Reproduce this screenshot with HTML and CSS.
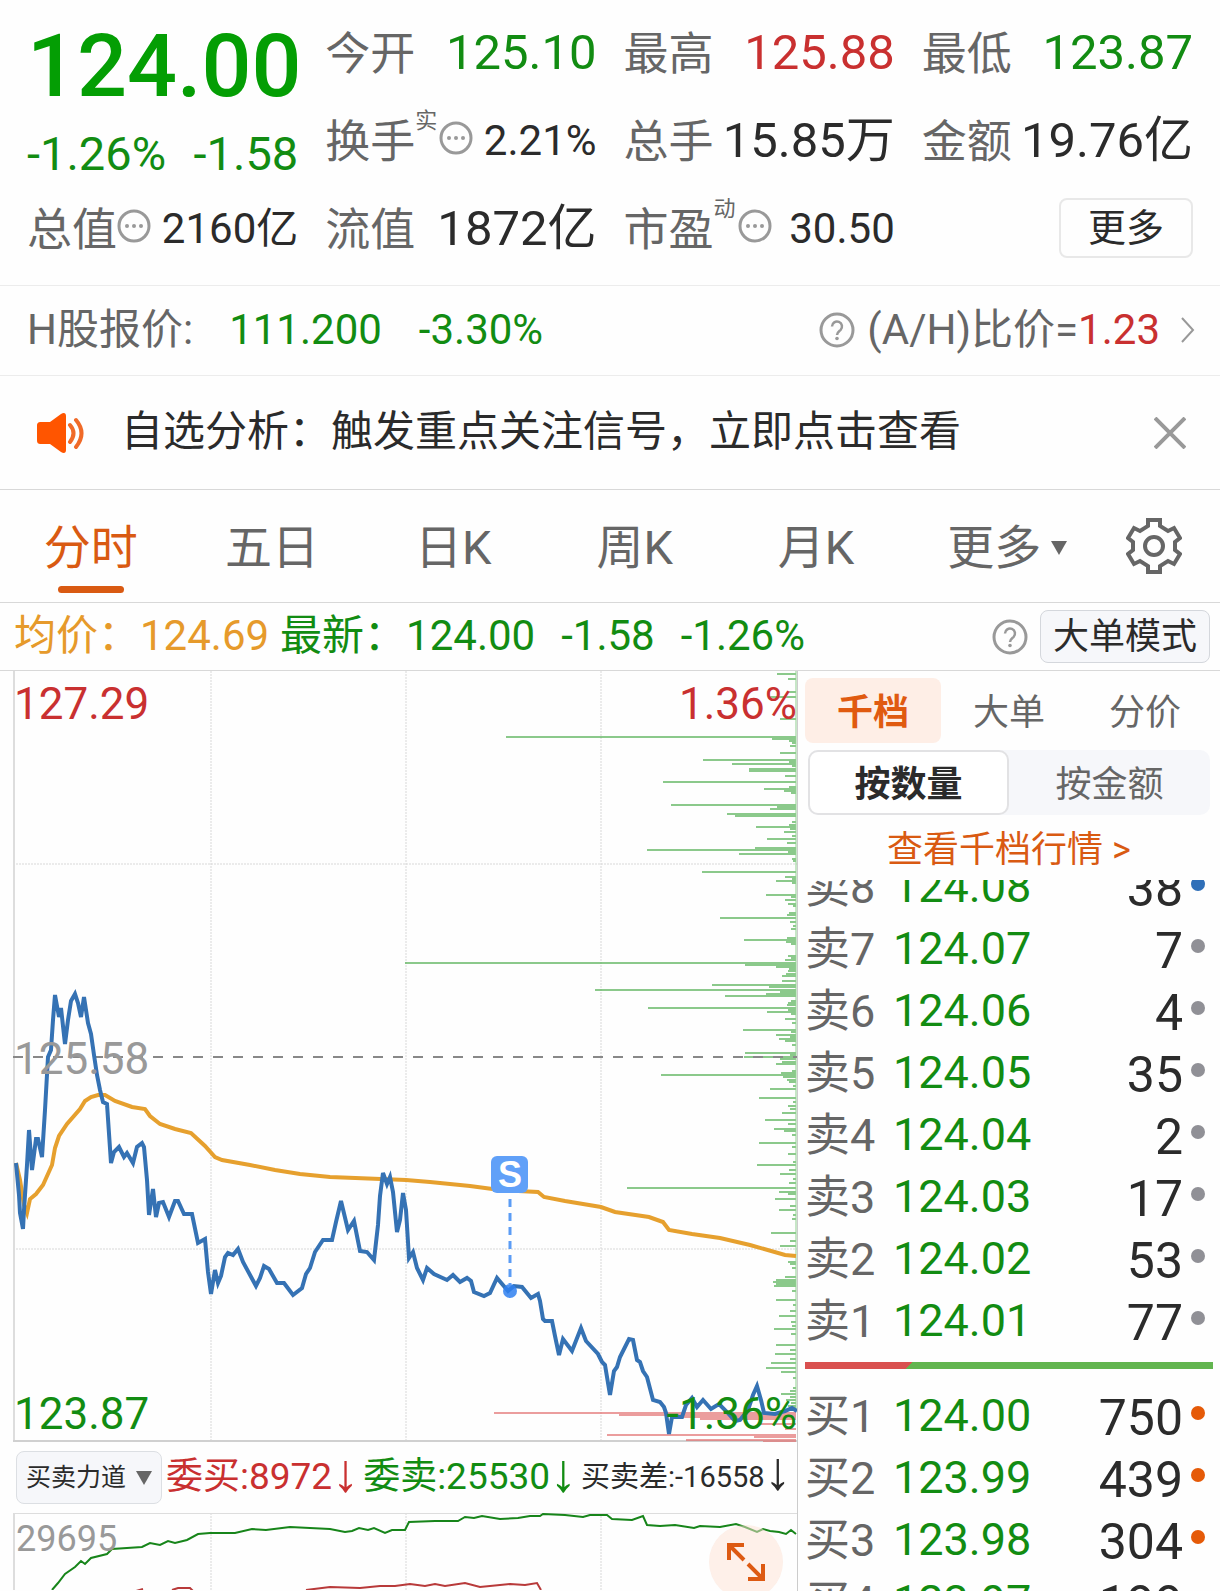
FILE: index.html
```html
<!DOCTYPE html>
<html lang="zh-CN">
<head>
<meta charset="utf-8">
<meta name="viewport" content="width=device-width, initial-scale=1">
<title>分时行情</title>
<link rel="stylesheet" href="styles.css">
</head>
<body>
<svg class="defs" aria-hidden="true">
  <symbol id="dots" viewBox="0 0 34 34"><circle cx="17" cy="17" r="15" fill="none" stroke="#999" stroke-width="3"/><circle cx="10" cy="17" r="2" fill="#999"/><circle cx="17" cy="17" r="2" fill="#999"/><circle cx="24" cy="17" r="2" fill="#999"/></symbol>
  <symbol id="help" viewBox="0 0 36 36"><circle cx="18" cy="18" r="16" fill="none" stroke="#999" stroke-width="3"/><path d="M13 14.500a5 5 0 1 1 8.500 3.600c-2.200 1.900-3.500 2.600-3.500 5" fill="none" stroke="#999" stroke-width="2.500"/><circle cx="18" cy="26.500" r="1.800" fill="#999"/></symbol>
</svg>

<header class="quote">
  <div class="last">
    <strong class="last-price">124.00</strong>
    <div class="last-change"><span>-1.26%</span><span>-1.58</span></div>
  </div>
  <div class="stat"><span class="name">今开</span><span class="value down">125.10</span></div>
  <div class="stat"><span class="name">最高</span><span class="value up">125.88</span></div>
  <div class="stat"><span class="name">最低</span><span class="value down">123.87</span></div>
  <div class="stat"><span class="name">换手<sup>实</sup></span><svg class="dots"><use href="#dots"/></svg><span class="value small">2.21%</span></div>
  <div class="stat"><span class="name">总手</span><span class="value">15.85万</span></div>
  <div class="stat"><span class="name">金额</span><span class="value">19.76亿</span></div>
  <div class="stat"><span class="name">总值</span><svg class="dots"><use href="#dots"/></svg><span class="value small">2160亿</span></div>
  <div class="stat"><span class="name">流值</span><span class="value">1872亿</span></div>
  <div class="stat"><span class="name">市盈<sup>动</sup></span><svg class="dots"><use href="#dots"/></svg><span class="value small">30.50</span></div>
  <div class="stat"><button class="more" type="button">更多</button></div>
</header>

<a class="hshare" href="#h">
  <span class="name">H股报价:</span>
  <span class="down h-price">111.200</span>
  <span class="down">-3.30%</span>
  <span class="ratio"><svg class="help"><use href="#help"/></svg><span>(A/H)比价=<b class="up">1.23</b></span>
  <svg class="chevron" viewBox="0 0 16 28"><path d="M2 2l11 12L2 26" fill="none" stroke="#999" stroke-width="2"/></svg></span>
</a>

<div class="notice">
  <svg class="speaker" viewBox="0 0 50 42"><path d="M4 10h9L24 2c3-2 5-1 5 2v34c0 3-2 4-5 2l-11-8H4c-3 0-4-1-4-4V14c0-3 1-4 4-4z" fill="#ff5500"/><path d="M33 13q7 8 0 17M39 8q11 13 0 27" fill="none" stroke="#f06a28" stroke-width="4" stroke-linecap="round"/></svg>
  <span>自选分析：触发重点关注信号，立即点击查看</span>
  <button class="close" type="button" aria-label="关闭"><svg viewBox="0 0 32 32"><path d="M1 1l30 30M31 1L1 31" stroke="#999" stroke-width="4"/></svg></button>
</div>

<nav class="periods">
  <button class="active" type="button">分时</button>
  <button type="button">五日</button>
  <button type="button">日K</button>
  <button type="button">周K</button>
  <button type="button">月K</button>
  <button class="others" type="button">更多<i class="caret"></i></button>
  <button class="settings" type="button" aria-label="设置"><svg viewBox="0 0 56 58"><path d="M22 3h12v6l8 5 6-3 6 10-5 4v8l5 4-6 10-6-3-8 5v6H22v-6l-8-5-6 3-6-10 5-4v-8l-5-4 6-10 6 3 8-5z" fill="none" stroke="#666" stroke-width="4"/><circle cx="28" cy="29" r="9" fill="none" stroke="#666" stroke-width="4"/></svg></button>
</nav>

<div class="info">
  <span class="average">均价：124.69</span>
  <span class="down latest">最新：124.00</span>
  <span class="down">-1.58</span>
  <span class="down">-1.26%</span>
  <svg class="help"><use href="#help"/></svg>
  <button class="big-order" type="button">大单模式</button>
</div>

<main class="board">
  <section class="charts">
    <div class="plot">
      <svg class="price-chart" viewBox="13 671 784 771" preserveAspectRatio="none">
        <path d="M13 864H797M13 1249H797M211 671V1442M406 671V1442M601 671V1442" stroke="#d8d8d8" stroke-dasharray="2 1" fill="none"/>
        <path d="M14 671V1442" stroke="#ddd" stroke-width="2"/>
        <path d="M13 1441H797" stroke="#d0d0d0" stroke-width="2"/>
        <path class="sell-depth" d="M777 674H796M788 679H796M789 692H796M770 697H796M780 719H796M506 737H796M772 739H796M789 741H796M792 743H796M790 746H796M780 753H796M703 760H796M789 762H796M732 764H796M792 766H796M749 769H796M749 771H796M785 776H796M663 782H796M789 787H796M764 789H796M784 791H796M791 793H796M671 805H796M777 807H796M770 809H796M727 814H796M735 816H796M792 822H796M789 825H796M756 827H796M790 829H796M784 832H796M792 836H796M767 839H796M787 843H796M755 848H796M647 850H796M788 852H796M739 854H796M792 859H796M793 861H796M702 872H796M785 877H796M792 879H796M776 881H796M792 883H796M766 895H796M791 897H796M785 900H796M788 904H796M793 906H796M789 913H796M787 915H796M720 918H796M790 922H796M793 926H796M791 929H796M787 938H796M744 940H796M786 942H796M791 944H796M788 956H796M791 958H796M785 960H796M405 963H796M745 965H796M776 967H796M789 969H796M788 971H796M786 974H796M782 976H796M782 981H796M712 985H796M769 987H796M595 990H796M780 992H796M766 994H796M725 996H796M791 1001H796M788 1003H796M787 1005H796M648 1008H796M788 1010H796M767 1012H796M791 1014H796M785 1019H796M792 1023H796M743 1030H796M791 1032H796M776 1035H796M790 1037H796M779 1039H796M785 1041H796M792 1045H796M745 1053H796M790 1055H796M744 1057H796M780 1059H796M782 1062H796M776 1064H796M792 1071H796M781 1073H796M661 1075H796M783 1077H796M787 1080H796M789 1082H796M793 1086H796M770 1089H796M759 1098H796M793 1102H796M788 1106H796M790 1109H796M782 1113H796M765 1120H796M788 1124H796M774 1129H796M784 1131H796M792 1135H796M759 1143H796M792 1147H796M788 1154H796M793 1162H796M757 1165H796M789 1170H796M780 1174H796M793 1179H796M789 1183H796M627 1188H796M779 1192H796M788 1194H796M775 1199H796M790 1206H796M779 1210H796M793 1215H796M792 1219H796M771 1233H796M790 1241H796M780 1246H796M788 1262H796M790 1264H796M792 1268H796M785 1277H796M776 1280H796M773 1282H796M776 1284H796M774 1286H796M792 1291H796M776 1300H796M793 1305H796M790 1311H796M779 1316H796M791 1322H796M792 1326H796M774 1329H796M791 1334H796M776 1345H796M790 1350H796M775 1354H796M790 1359H796M771 1363H796M766 1368H796M781 1372H796M793 1378H796M793 1388H796M790 1391H796M781 1394H796M790 1397H796M786 1400H796M791 1403H796M788 1406H796M792 1408H796"/>
        <path d="M796 671V1410" stroke="#8fcf8f" stroke-width="1"/>
        <path class="buy-depth" d="M494 1413H796M619 1415H796M672 1417H796M700 1419H796M760 1424H796M785 1429H796M607 1435H796M754 1437H796M686 1440H796M763 1442H796"/>
        <path d="M13 1057H797" stroke="#888" stroke-width="2" stroke-dasharray="10 10"/>
        <polyline class="average-line" points="16,1163 20,1180 24,1205 27,1213 30,1199 36,1194 43,1185 52,1165 55,1148 59,1136 67,1124 80,1109 85,1101 91,1097 98,1095 105,1095 115,1101 132,1107 145,1109 150,1116 160,1124 175,1129 191,1133 205,1146 215,1157 222,1160 250,1165 275,1170 300,1174 330,1177 406,1180 430,1182 470,1186 500,1190 538,1192 544,1197 565,1201 601,1207 615,1212 649,1217 663,1222 669,1230 692,1234 720,1238 750,1245 785,1255 796,1256"/>
        <polyline class="price-line" points="16,1163 19,1195 20,1213 23,1229 24,1210 27,1165 29,1130 32,1170 36,1139 38,1139 42,1157 45,1110 48,1057 51,1050 53,1020 55,995 59,1017 61,1008 65,1044 68,1020 71,1001 75,994 78,1003 81,1017 84,997 88,1023 91,1034 94,1055 97,1075 100,1090 103,1102 107,1104 111,1163 114,1152 119,1147 124,1157 127,1153 133,1163 137,1147 142,1143 144,1147 147,1180 149,1215 153,1189 156,1217 159,1203 163,1202 169,1217 175,1201 178,1201 184,1214 192,1214 198,1243 205,1239 208,1272 211,1294 215,1270 218,1283 221,1276 225,1257 228,1253 233,1255 238,1249 243,1262 256,1286 260,1278 264,1266 269,1269 277,1283 284,1283 293,1295 302,1288 306,1274 310,1268 315,1252 323,1240 332,1240 336,1222 341,1201 348,1230 354,1221 360,1251 367,1252 374,1260 378,1225 380,1196 383,1173 387,1184 390,1177 393,1192 397,1232 400,1220 403,1193 406,1210 409,1258 413,1252 417,1268 423,1280 427,1268 434,1274 447,1280 453,1275 460,1282 467,1278 471,1281 474,1292 484,1296 490,1293 497,1278 508,1291 514,1286 522,1287 531,1298 538,1294 540,1301 543,1319 545,1321 552,1321 555,1336 559,1355 563,1339 572,1351 581,1328 586,1341 598,1354 602,1362 605,1365 610,1395 614,1371 617,1367 620,1357 629,1339 633,1340 637,1360 640,1362 643,1371 647,1377 653,1400 660,1402 664,1407 666,1413 669,1434 672,1417 682,1417 686,1405 692,1398 697,1407 703,1400 711,1409 719,1404 727,1412 735,1421 740,1420 748,1410 753,1395 757,1386 761,1400 764,1413 775,1414 785,1411 792,1408 797,1411"/>
        <path d="M510 1199V1284" stroke="#5b9cf5" stroke-width="3" stroke-dasharray="8 6"/>
        <circle cx="510" cy="1291" r="7" fill="#2f80f0" opacity=".85"/>
        <rect x="491" y="1156" width="37" height="37" rx="6" fill="#60a0f8"/>
        <text x="510" y="1187" class="mark">S</text>
      </svg>
      <span class="axis top left up">127.29</span>
      <span class="axis top right up">1.36%</span>
      <span class="axis middle left">125.58</span>
      <span class="axis bottom left down">123.87</span>
      <span class="axis bottom right down">-1.36%</span>
    </div>

    <div class="indicator">
      <button class="picker" type="button">买卖力道<i class="caret"></i></button>
      <span class="up">委买:8972<i class="arrow">↓</i></span>
      <span class="down">委卖:25530<i class="arrow">↓</i></span>
      <span class="diff">买卖差:-16558<i class="arrow">↓</i></span>
    </div>

    <div class="subplot">
      <svg class="force-chart" viewBox="13 1514 784 77" preserveAspectRatio="none">
        <path d="M211 1514V1591M406 1514V1591M601 1514V1591" stroke="#d8d8d8" stroke-dasharray="2 1"/>
        <path d="M14 1514V1591M13 1514H797" stroke="#ddd" stroke-width="2"/>
        <polyline fill="none" stroke="#17851a" stroke-width="2" points="52,1591 58,1584 65,1575 75,1568 81,1562 85,1565 91,1559 107,1555 112,1550 142,1548 150,1544 160,1546 168,1542 175,1544 187,1541 198,1535 210,1534 235,1534 252,1530 266,1531 290,1528 330,1530 345,1533 352,1532 359,1529 368,1531 374,1529 385,1534 392,1531 405,1531 409,1523 435,1522 458,1522 465,1518 474,1519 482,1517 500,1520 518,1519 530,1517 540,1517 543,1515 565,1516 583,1518 590,1516 607,1516 612,1520 632,1521 643,1517 647,1526 660,1527 675,1526 694,1529 700,1527 720,1528 736,1525 745,1528 757,1533 763,1530 770,1532 779,1533 786,1535 791,1531 796,1535"/>
        <path fill="none" stroke="#b83a3a" stroke-width="2" d="M136 1592L143 1590M172 1591L178 1589L190 1589L193 1592M306 1591L330 1588L360 1589L380 1587L395 1587L410 1585L425 1587L435 1585L445 1587L465 1584L480 1588L510 1585L525 1586L537 1584L541 1591"/>
      </svg>
      <span class="axis scale">29695</span>
      <button class="expand" type="button" aria-label="全屏"><svg viewBox="0 0 38 38"><path d="M2 17V2h15M2 2l15 15M36 21v15H21M36 36L21 21" fill="none" stroke="#dd5a12" stroke-width="4"/></svg></button>
    </div>
  </section>

  <aside class="depth">
    <div class="modes">
      <button class="active" type="button">千档</button>
      <button type="button">大单</button>
      <button type="button">分价</button>
    </div>
    <div class="segment">
      <button class="active" type="button">按数量</button>
      <button type="button">按金额</button>
    </div>
    <a class="all-levels" href="#levels">查看千档行情 &gt;</a>
    <div class="asks">
      <table>
        <tr><th>卖8</th><td class="price">124.08</td><td class="qty">38</td><td class="dot blue"></td></tr>
        <tr><th>卖7</th><td class="price">124.07</td><td class="qty">7</td><td class="dot"></td></tr>
        <tr><th>卖6</th><td class="price">124.06</td><td class="qty">4</td><td class="dot"></td></tr>
        <tr><th>卖5</th><td class="price">124.05</td><td class="qty">35</td><td class="dot"></td></tr>
        <tr><th>卖4</th><td class="price">124.04</td><td class="qty">2</td><td class="dot"></td></tr>
        <tr><th>卖3</th><td class="price">124.03</td><td class="qty">17</td><td class="dot"></td></tr>
        <tr><th>卖2</th><td class="price">124.02</td><td class="qty">53</td><td class="dot"></td></tr>
        <tr><th>卖1</th><td class="price">124.01</td><td class="qty">77</td><td class="dot"></td></tr>
      </table>
    </div>
    <div class="balance"></div>
    <div class="bids">
      <table>
        <tr><th>买1</th><td class="price">124.00</td><td class="qty">750</td><td class="dot orange"></td></tr>
        <tr><th>买2</th><td class="price">123.99</td><td class="qty">439</td><td class="dot orange"></td></tr>
        <tr><th>买3</th><td class="price">123.98</td><td class="qty">304</td><td class="dot orange"></td></tr>
        <tr><th>买4</th><td class="price">123.97</td><td class="qty">199</td><td class="dot orange"></td></tr>
      </table>
    </div>
  </aside>
</main>
</body>
</html>
```
FILE: styles.css
```css
* { box-sizing: border-box; }

body {
  margin: 0;
  height: 100vh;
  overflow: hidden;
  display: flex;
  flex-direction: column;
  background: #fefefe;
  color: #2b2b2b;
  font-family: Roboto, "Noto Sans CJK SC", sans-serif;
  font-size: 42px;
  line-height: 1.2;
  white-space: nowrap;
}

button {
  margin: 0;
  padding: 0;
  border: 0;
  background: none;
  color: inherit;
  font: inherit;
}

a { color: inherit; text-decoration: none; }
i { font-style: normal; }
b { font-weight: 400; }
svg { display: block; flex: none; }

.defs { position: absolute; width: 0; height: 0; }
.up { color: #c93030; }
.down { color: #128c12; }
.name { color: #666; }
.help { width: 36px; height: 36px; }

/* Quote header */
.quote {
  flex: none;
  display: grid;
  grid-template-columns: repeat(4, minmax(0, 1fr));
  grid-auto-rows: 88px;
  column-gap: 27px;
  padding: 8px 27px 13px;
  border-bottom: 1px solid #ececec;
}

.last {
  grid-row: span 2;
  display: flex;
  flex-direction: column;
  color: #049e04;
}

.last-price {
  font-size: 88px;
  font-weight: 500;
  line-height: 116px;
}

.last-change {
  display: flex;
  justify-content: space-between;
  font-size: 47px;
  line-height: 60px;
  color: #128c12;
}

.stat { display: flex; align-items: center; }
.stat .name { padding-top: 5px; font-size: 45px; }
.stat sup { margin-right: 2px; font-size: 22px; line-height: 0; vertical-align: 30px; }
.stat .value { margin-left: auto; padding-top: 2px; font-size: 49px; }
.stat .small { font-size: 42px; }
.dots { width: 34px; height: 34px; margin-bottom: 4px; }

.more {
  width: 134px;
  height: 60px;
  margin-left: auto;
  border: 2px solid #e8e8e8;
  border-radius: 8px;
  font-size: 38px;
  line-height: 52px;
}

/* H share row */
.hshare {
  flex: none;
  height: 90px;
  display: flex;
  align-items: center;
  padding: 0 24px 0 27px;
  border-bottom: 1px solid #ececec;
}

.h-price { margin: 0 37px 0 36px; }

.ratio {
  display: flex;
  align-items: center;
  gap: 12px;
  margin-left: auto;
  color: #666;
}

.chevron { width: 16px; height: 28px; margin-left: 8px; }

/* Notice row */
.notice {
  flex: none;
  height: 114px;
  display: flex;
  align-items: center;
  padding: 0 34px 0 37px;
  border-bottom: 1px solid #d8d8d8;
}

.speaker { width: 50px; height: 42px; margin-right: 34px; }
.close { margin-left: auto; }
.close svg { width: 32px; height: 32px; }

/* Period tabs */
.periods {
  flex: none;
  height: 113px;
  display: grid;
  grid-template-columns: repeat(6, minmax(0, 1fr)) 132px;
  border-bottom: 1px solid #d8d8d8;
  color: #666;
}

.periods button {
  display: flex;
  align-items: center;
  justify-content: center;
  padding-top: 4px;
  font-size: 47px;
}

.periods .active {
  position: relative;
  color: #d95a12;
}

.periods .active::after {
  content: "";
  position: absolute;
  bottom: 9px;
  width: 66px;
  height: 7px;
  border-radius: 4px;
  background: #d95a12;
}

.periods .others { padding-left: 20px; }
.periods .settings { padding-top: 0; }
.settings svg { width: 56px; height: 58px; }

.caret {
  margin-left: 10px;
  border: 8px solid transparent;
  border-top: 14px solid #666;
  border-bottom: 0;
}

/* Average and latest price line */
.info {
  flex: none;
  height: 68px;
  display: flex;
  align-items: center;
  gap: 26px;
  padding: 0 10px 0 14px;
  border-bottom: 1px solid #d8d8d8;
}

.average { color: #e69a2b; }
.latest { margin-left: -15px; }
.info .help { margin-left: auto; }

.big-order {
  width: 170px;
  height: 53px;
  margin-left: -14px;
  border: 1px solid #d4d7dc;
  border-radius: 8px;
  background: #f6f7fa;
  font-size: 36px;
  line-height: 53px;
}

/* Charts and order book */
.board {
  flex: 1;
  min-height: 0;
  overflow: hidden;
  display: grid;
  grid-template-columns: minmax(0, 798fr) minmax(0, 422fr);
}

.charts {
  display: flex;
  flex-direction: column;
  min-height: 0;
  padding-left: 13px;
  border-right: 1px solid #ccc;
}

.plot { position: relative; flex: none; }
.price-chart { width: 100%; height: 771px; }
.sell-depth { stroke: #4fae4f; stroke-width: 2; opacity: .65; }
.buy-depth { stroke: #e26a6a; stroke-width: 2; opacity: .65; }
.average-line { fill: none; stroke: #e6a02e; stroke-width: 4; }
.price-line { fill: none; stroke: #3572b4; stroke-width: 4; }

.mark {
  fill: #fff;
  font-family: "Liberation Sans", sans-serif;
  font-size: 36px;
  font-weight: 700;
  text-anchor: middle;
}

.axis { position: absolute; font-size: 44px; line-height: 56px; }
.axis.left { left: 1px; }
.axis.right { right: 0; }
.axis.top { top: 5px; }
.axis.middle { top: 360px; color: #999; }
.axis.bottom { bottom: 0; }

.indicator {
  flex: none;
  height: 71px;
  display: flex;
  align-items: center;
  gap: 4px;
  padding: 0 4px 0 3px;
  font-size: 37px;
}

.picker {
  flex: none;
  width: 146px;
  height: 53px;
  display: flex;
  align-items: center;
  justify-content: center;
  border: 1px solid #dcdfe3;
  border-radius: 8px;
  background: #f6f7fa;
  font-size: 25px;
}

.indicator .diff { font-size: 29px; }

.arrow {
  font-family: "Liberation Sans", sans-serif;
  font-size: 54px;
  line-height: 0;
  vertical-align: -2px;
}

.subplot { position: relative; flex: 1; }
.force-chart { width: 100%; height: 77px; }

.axis.scale {
  top: 2px;
  left: 3px;
  color: #999;
  font-size: 36px;
  line-height: 48px;
}

.expand {
  position: absolute;
  top: 12px;
  right: 14px;
  width: 74px;
  height: 74px;
  display: flex;
  align-items: center;
  justify-content: center;
  border-radius: 50%;
  background: rgba(253, 226, 212, .5);
}

.expand svg { width: 38px; height: 38px; }

.depth { padding: 7px 7px 0; font-size: 36px; min-height: 0; }
.modes { display: flex; height: 65px; color: #666; }
.modes button { flex: 1; padding-top: 6px; border-radius: 8px; }

.modes .active {
  background: #feeee6;
  color: #e05a10;
  font-weight: 700;
}

.segment {
  display: flex;
  height: 65px;
  margin: 7px 3px 0;
  border-radius: 10px;
  background: #f6f7fa;
  color: #666;
}

.segment button { width: 50%; padding-top: 6px; }

.segment .active {
  border: 2px solid #e2e2e4;
  border-radius: 10px;
  background: #fff;
  color: #2b2b2b;
  font-weight: 700;
}

.all-levels {
  display: block;
  height: 65px;
  color: #d95a12;
  line-height: 70px;
  text-align: center;
}

.asks {
  height: 471px;
  overflow: hidden;
  display: flex;
  flex-direction: column;
  justify-content: flex-end;
}

.depth table {
  flex: none;
  width: 100%;
  border-collapse: collapse;
  table-layout: fixed;
}

.depth tr { height: 62px; }
.depth th, .depth td { padding: 0; line-height: 56px; }

.depth th {
  width: 88px;
  padding-top: 4px;
  color: #666;
  font-size: 45px;
  font-weight: 400;
  text-align: left;
}

.depth .price { width: 150px; padding-top: 2px; color: #128c12; font-size: 45px; }
.depth .qty { padding-top: 6px; font-size: 50px; text-align: right; }
.depth .dot { width: 30px; }

.dot::before {
  content: "";
  display: block;
  width: 14px;
  height: 14px;
  margin: 0 8px 4px auto;
  border-radius: 50%;
  background: #909096;
}

.dot.blue::before { background: #2f6fb8; }
.dot.orange::before { background: #e55a08; }

.balance {
  height: 7px;
  margin: 11px 0 15px;
  background: linear-gradient(135deg, #d9504f 26%, #62b54f 26%);
}
```
